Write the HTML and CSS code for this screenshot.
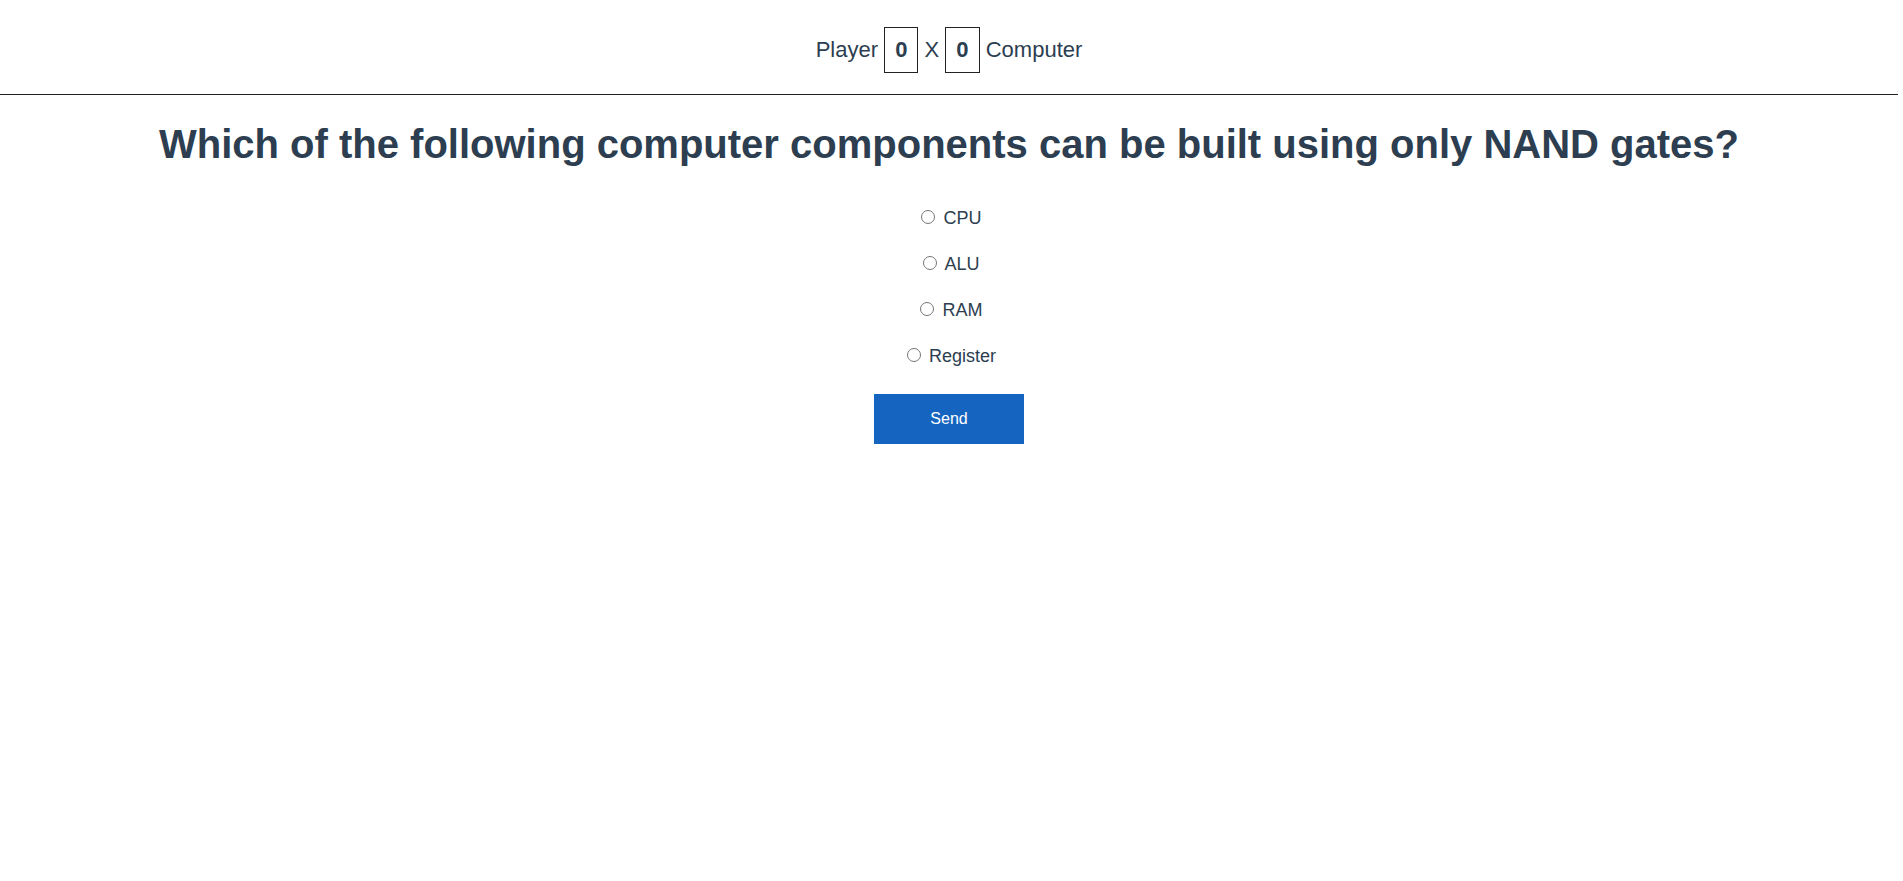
FILE: index.html
```html
<!DOCTYPE html>
<html lang="en">
<head>
<meta charset="utf-8">
<title>Quiz</title>
<link rel="stylesheet" href="styles.css">
</head>
<body>
<div class="app">
  <header class="score">
    <span class="name">Player</span>
    <span class="box">0</span>
    <span class="x">X</span>
    <span class="box">0</span>
    <span class="name">Computer</span>
  </header>
  <main class="quiz">
    <h1 class="question">Which of the following computer components can be built using only NAND gates?</h1>
    <form class="options">
      <div class="option"><input type="radio" name="a" id="o1"> <label for="o1">CPU</label></div>
      <div class="option"><input type="radio" name="a" id="o2"> <label for="o2">ALU</label></div>
      <div class="option"><input type="radio" name="a" id="o3"> <label for="o3">RAM</label></div>
      <div class="option"><input type="radio" name="a" id="o4"> <label for="o4">Register</label></div>
      <button type="button" class="send">Send</button>
    </form>
  </main>
</div>
</body>
</html>
```

FILE: styles.css
```css
html, body {
  margin: 0;
  padding: 0;
  background: #fff;
}
.app {
  width: 1898px;
  font-family: "Liberation Sans", Arial, sans-serif;
  color: #2c3e50;
  text-align: center;
}
.score {
  padding: 27px 0 21px;
  border-bottom: 1px solid #222;
  font-size: 22px;
  line-height: 24px;
}
.box {
  display: inline-block;
  padding: 10px;
  border: 1px solid #222;
  font-weight: bold;
  vertical-align: middle;
}
.name, .x {
  vertical-align: middle;
}
.quiz {
  padding-top: 26px;
}
.question {
  margin: 0 0 28px;
  font-size: 40px;
  line-height: 46px;
  font-weight: bold;
}
.options {
  margin: 0;
}
.option {
  padding: 12px 0;
  font-size: 18px;
  line-height: 22px;
}
.option input {
  width: 14px;
  height: 14px;
  margin: 0 3px 0 5px;
}
.send {
  display: block;
  margin: 15px auto 0;
  width: 150px;
  height: 50px;
  border: none;
  background: #1565c0;
  color: #fff;
  font-family: "Liberation Sans", Arial, sans-serif;
  font-size: 16px;
}
```
